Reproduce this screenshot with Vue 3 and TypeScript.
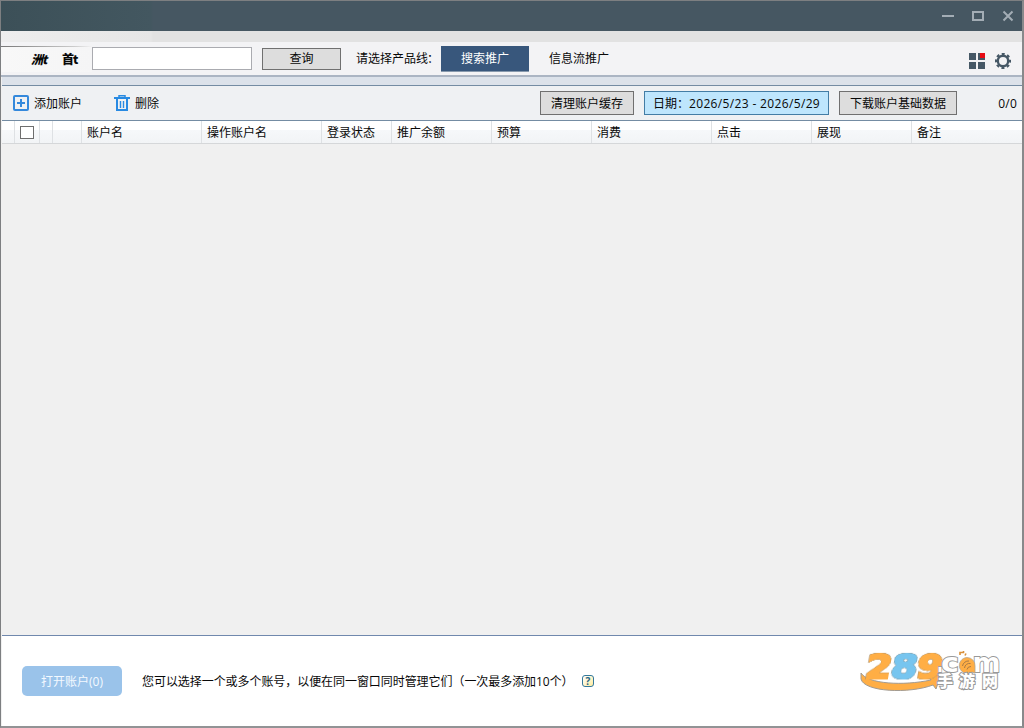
<script setup lang="ts">
interface Column {
  label: string
  width: number
}

const columns: Column[] = [
  { label: '账户名', width: 120 },
  { label: '操作账户名', width: 120 },
  { label: '登录状态', width: 70 },
  { label: '推广余额', width: 100 },
  { label: '预算', width: 100 },
  { label: '消费', width: 120 },
  { label: '点击', width: 100 },
  { label: '展现', width: 100 },
  { label: '备注', width: 111 },
]
</script>

<template>
  <div class="window">
    <header class="titlebar">
      <svg class="controls" width="80" height="20" viewBox="0 0 80 20" fill="none" stroke="#a3adb5">
        <path d="M2 11H14" stroke-width="2" />
        <rect x="33" y="7" width="10" height="8" stroke-width="2" />
        <path d="M63.5 6.5l9 9M72.5 6.5l-9 9" stroke-width="2" />
      </svg>
    </header>
    <div class="strip"></div>

    <section class="search-row">
      <div class="scope"><span class="scope-a">洲t</span><span class="scope-b">首t</span></div>
      <input class="search" type="text" aria-label="账户" />
      <button class="btn query">查询</button>
      <span class="line-label">请选择产品线<span class="colon">：</span></span>
      <button class="tab active">搜索推广</button>
      <button class="tab plain">信息流推广</button>
      <div class="tools">
        <svg width="16" height="16" viewBox="0 0 16 16">
          <path fill="#465866" d="M0 0h7v7H0zM9 0h7v7H9zM0 9h7v7H0zM9 9h7v7H9z" />
          <rect x="11" y="0" width="5" height="5" fill="#e60b14" />
        </svg>
        <svg width="16" height="16" viewBox="0 0 16 16" fill="none" stroke="#465866">
          <circle cx="8" cy="8" r="5.2" stroke-width="2.4" />
          <circle cx="8" cy="8" r="7" stroke-width="2.2" stroke-dasharray="2.9 2.598" stroke-dashoffset="1.45" />
        </svg>
      </div>
    </section>
    <div class="divider"></div>

    <section class="actions">
      <button class="link add">
        <svg width="16" height="16" viewBox="0 0 16 16" fill="none" stroke="#3489dc" stroke-width="2">
          <rect x="1" y="1" width="14" height="14" rx="1" />
          <path d="M8 4v8M4 8h8" />
        </svg>
        <span>添加账户</span>
      </button>
      <button class="link remove">
        <svg width="16" height="16" viewBox="0 0 16 16" fill="none" stroke="#288ae2">
          <path d="M0 3H16" stroke-width="2" />
          <path d="M5 2V.8h6V2" stroke-width="1.5" />
          <path d="M3 4v11h10V4" stroke-width="2" />
          <path d="M6.5 6v7M9.5 6v7" stroke-width="1.4" />
        </svg>
        <span>删除</span>
      </button>
      <button class="btn cache">清理账户缓存</button>
      <button class="btn date">日期：<span>2026/5/23 - 2026/5/29</span></button>
      <button class="btn download">下载账户基础数据</button>
      <span class="count">0/0</span>
    </section>

    <div class="table-head">
      <div class="cell gap"></div>
      <div class="cell check"><span class="box"></span></div>
      <div class="cell small"></div>
      <div class="cell icon"></div>
      <div v-for="column in columns" :key="column.label" class="cell" :style="{ width: column.width + 'px' }">
        {{ column.label }}
      </div>
    </div>
    <main class="table-body"></main>

    <footer class="footer">
      <button class="open">打开账户(0)</button>
      <span class="hint">您可以选择一个或多个账号，以便在同一窗口同时管理它们（一次最多添加10个）</span>
      <span class="help">?</span>
      <svg class="logo" width="142" height="44" viewBox="0 0 142 44">
        <path d="M1 24C8 35 43 37 71 31l-2-3 12-3-5 15-3-4C49 45 4 43 1 30z" fill="#ffae45" stroke="#a29b92" stroke-width="1" />
        <g class="digits" transform="translate(3 29.5) skewX(-10)">
          <text x="1" y="0" textLength="26" lengthAdjust="spacingAndGlyphs" fill="#ffae45" stroke="#ffae45">2</text>
          <text x="26.5" y="0" textLength="26" lengthAdjust="spacingAndGlyphs" fill="#77c5ef" stroke="#77c5ef">8</text>
          <text x="52" y="0" textLength="26" lengthAdjust="spacingAndGlyphs" fill="#ffae45" stroke="#ffae45">9</text>
        </g>
        <g class="domain">
          <text x="77" y="22.500" textLength="6" lengthAdjust="spacingAndGlyphs">.</text>
          <text x="81" y="22.500" textLength="18" lengthAdjust="spacingAndGlyphs">c</text>
          <text x="112.5" y="22.500" textLength="28" lengthAdjust="spacingAndGlyphs">m</text>
        </g>
        <path d="M107 8.5a8 8 0 1 0 5 14.5l3 1v-7a8 8 0 0 0-8-8.5z" fill="#ffae45" stroke="#b8a58c" stroke-width=".8" />
        <path d="M100 6V3.5h3.5V2M105 6.5l1-2" fill="none" stroke="#d9903a" stroke-width="1.6" />
        <path d="M102.5 17a6 6 0 0 1 6.5-5M104.5 19a5 5 0 0 1 6-4.500M107 20.500a4 4 0 0 1 4-3" fill="none" stroke="#a87a45" stroke-width="1" />
        <g class="site">
          <text x="77" y="37.500">手</text>
          <text x="99" y="37.500">游</text>
          <text x="122" y="37.500">网</text>
        </g>
      </svg>
    </footer>
  </div>
</template>

<style>
body {
  margin: 0;
  overflow: hidden;
}
</style>

<style scoped>
* {
  box-sizing: border-box;
}

.window {
  width: 1024px;
  height: 728px;
  display: flex;
  flex-direction: column;
  border: 1px solid #7d7f81;
  border-right: 2px solid #88898b;
  border-bottom: 2px solid #929395;
  background: #f0f0f0;
  color: #080808;
  font: 12px/16px "Open Sans", "Noto Sans CJK SC", sans-serif;
}

button {
  font: inherit;
  color: inherit;
  padding: 1px 0 0;
  border: 0;
  background: none;
  white-space: nowrap;
}

.titlebar {
  height: 30px;
  flex: none;
  display: flex;
  justify-content: flex-end;
  padding: 4px 2px 0 0;
  background: linear-gradient(90deg, #3c5058, #435760 150px, #465762 152px);
}

.strip {
  height: 11px;
  flex: none;
  background: linear-gradient(90deg, #eee, #e6e6e6 150px, #e2e2e2 152px);
}

.search-row {
  height: 35px;
  flex: none;
  display: flex;
  align-items: center;
  background: #f3f3f5;
  border-bottom: 2px solid #abb5c3;
}

.scope {
  width: 91px;
  height: 26px;
  display: flex;
  align-items: center;
  padding-left: 30px;
  border-top: 1px solid #ccc;
  border-image: linear-gradient(90deg, #777, #ccc 80%, transparent) 1;
  background: linear-gradient(90deg, #f8f8f8, #f5f5f6);
  font: italic 900 12px/12px "Noto Sans CJK SC", sans-serif;
  letter-spacing: -1px;
}

.scope-a {
  width: 31px;
}

.scope-b {
  font-style: normal;
}

.search {
  width: 160px;
  height: 23px;
  border: 1px solid #aaabb0;
  padding: 0 4px;
  background: #fff;
  font: inherit;
}

.btn {
  border: 1px solid #707070;
  background: #ddd;
}

.query {
  width: 79px;
  height: 22px;
  margin-left: 10px;
  padding-top: 0;
}

.line-label {
  width: 84px;
  margin-left: 15px;
  white-space: nowrap;
}

.colon {
  margin-left: -1px;
}

.tab {
  height: 26px;
}

.active {
  width: 88px;
  margin-left: 1px;
  background: #38577c;
  border-bottom: 1px solid #8799ad;
  color: #fff;
}

.plain {
  width: 60px;
  margin-left: 20px;
}

.tools {
  display: flex;
  gap: 10px;
  margin: 5px 11px 0 auto;
}

.divider {
  height: 9px;
  flex: none;
  margin-left: 1px;
  background: #dce2ea;
  border-bottom: 1px solid #748ca3;
}

.actions {
  height: 35px;
  flex: none;
  display: flex;
  align-items: center;
  margin-left: 1px;
  padding-left: 11px;
  background: #eff1f3;
  border-bottom: 1px solid #748ca3;
}

.link {
  display: flex;
  align-items: center;
  gap: 5px;
  padding: 0;
}

.link span {
  padding-top: 2px;
}

.remove {
  margin-left: 32px;
}

.cache {
  width: 94px;
  height: 24px;
  margin-left: auto;
}

.date {
  width: 185px;
  height: 24px;
  margin-left: 10px;
  border-color: #437da5;
  background: #bee6fd;
}

.date span {
  letter-spacing: 0.35px;
}

.download {
  width: 118px;
  height: 24px;
  margin-left: 10px;
}

.count {
  width: 65px;
  padding: 1px 5px 0 0;
  text-align: right;
  letter-spacing: 0.25px;
}

.table-head {
  height: 23px;
  flex: none;
  display: flex;
  margin-left: 1px;
  overflow: hidden;
  background: linear-gradient(#fff 0 40%, #f6f8fa 42%, #f2f4f6);
  border-bottom: 1px solid #d5d7d9;
}

.cell {
  flex: none;
  padding: 4px 0 0 5px;
  border-right: 1px solid #dee1e4;
  white-space: nowrap;
}

.gap {
  width: 13px;
}

.check {
  width: 25px;
}

.small {
  width: 13px;
}

.icon {
  width: 29px;
}

.box {
  display: block;
  width: 14px;
  height: 13px;
  margin-top: 1px;
  border: 1px solid #6e6e6e;
  background: #fff;
}

.table-body {
  flex: 1;
}

.footer {
  height: 91px;
  flex: none;
  display: flex;
  align-items: center;
  margin-left: 1px;
  padding-left: 20px;
  background: #fff;
  border-top: 1px solid #7088ad;
}

.open {
  width: 100px;
  height: 30px;
  padding-top: 2px;
  border-radius: 5px;
  background: #9ac3ea;
  color: #f3f9ff;
}

.hint {
  width: 432px;
  margin-left: 20px;
  padding-top: 2px;
  letter-spacing: -0.06px;
  white-space: nowrap;
}

.help {
  width: 12px;
  height: 12px;
  margin-left: 8px;
  border: 1px solid #34799b;
  border-radius: 3px;
  background: linear-gradient(135deg, #fff, #ffec9f);
  color: #286485;
  font: bold 10px/10px "Open Sans", sans-serif;
  text-align: center;
}

.logo {
  margin: -21px 20px 0 auto;
  overflow: visible;
}

.digits text {
  font: bold 33px "DejaVu Sans", sans-serif;
  stroke-width: 2.2;
  filter: drop-shadow(0 0 0.5px #8a857c) drop-shadow(0 0 0.4px #8a857c);
}

.domain text {
  font: bold 27px "DejaVu Sans", sans-serif;
  fill: #fff;
  stroke: #999;
  stroke-width: 1.8;
  paint-order: stroke;
}

.site text {
  font: 900 16px "Noto Sans CJK SC", sans-serif;
  fill: #fff;
  stroke: #999;
  stroke-width: 2;
  paint-order: stroke;
}
</style>
